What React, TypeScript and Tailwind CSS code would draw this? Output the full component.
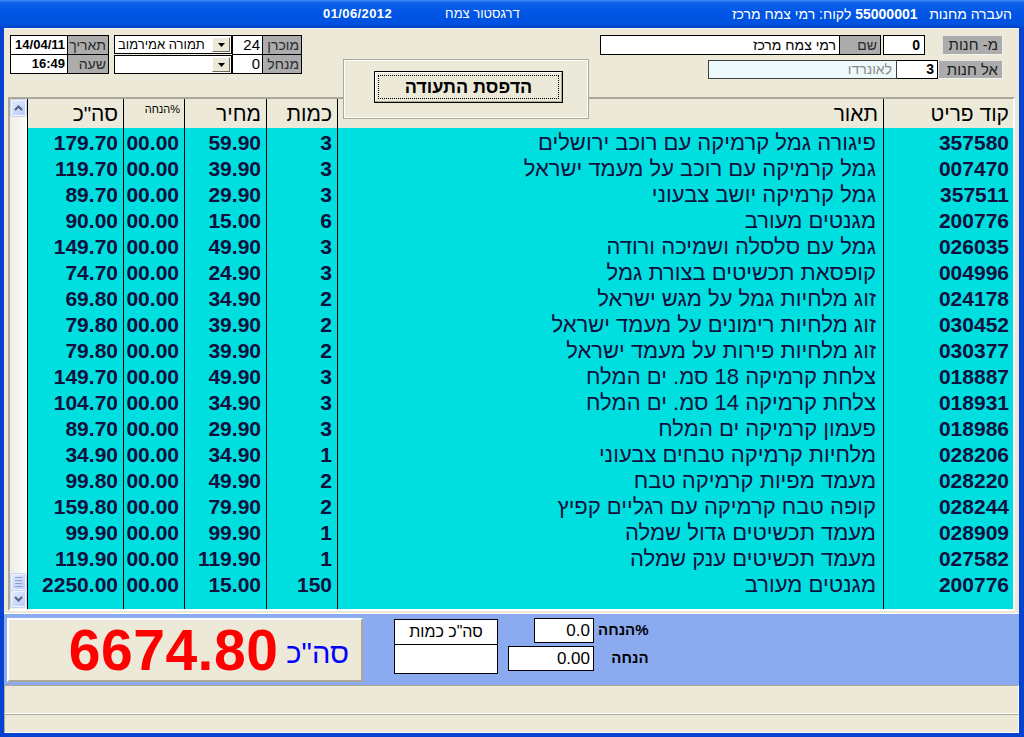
import React from "react";

const rows: [string, string, string, string, string, string][] = [
  ["357580", "פיגורה גמל קרמיקה עם רוכב ירושלים", "3", "59.90", "00.00", "179.70"],
  ["007470", "גמל קרמיקה עם רוכב על מעמד ישראל", "3", "39.90", "00.00", "119.70"],
  ["357511", "גמל קרמיקה יושב צבעוני", "3", "29.90", "00.00", "89.70"],
  ["200776", "מגנטים מעורב", "6", "15.00", "00.00", "90.00"],
  ["026035", "גמל עם סלסלה ושמיכה ורודה", "3", "49.90", "00.00", "149.70"],
  ["004996", "קופסאת תכשיטים בצורת גמל", "3", "24.90", "00.00", "74.70"],
  ["024178", "זוג מלחיות גמל על מגש ישראל", "2", "34.90", "00.00", "69.80"],
  ["030452", "זוג מלחיות רימונים על מעמד ישראל", "2", "39.90", "00.00", "79.80"],
  ["030377", "זוג מלחיות פירות על מעמד ישראל", "2", "39.90", "00.00", "79.80"],
  ["018887", "צלחת קרמיקה 18 סמ. ים המלח", "3", "49.90", "00.00", "149.70"],
  ["018931", "צלחת קרמיקה 14 סמ. ים המלח", "3", "34.90", "00.00", "104.70"],
  ["018986", "פעמון קרמיקה ים המלח", "3", "29.90", "00.00", "89.70"],
  ["028206", "מלחיות קרמיקה טבחים צבעוני", "1", "34.90", "00.00", "34.90"],
  ["028220", "מעמד מפיות קרמיקה טבח", "2", "49.90", "00.00", "99.80"],
  ["028244", "קופה טבח קרמיקה עם רגליים קפיץ", "2", "79.90", "00.00", "159.80"],
  ["028909", "מעמד תכשיטים גדול שמלה", "1", "99.90", "00.00", "99.90"],
  ["027582", "מעמד תכשיטים ענק שמלה", "1", "119.90", "00.00", "119.90"],
  ["200776", "מגנטים מעורב", "150", "15.00", "00.00", "2250.00"],
];

const cols = "grid grid-cols-[96px_61px_82px_71px_546px_130px]";

function Combo({ text }: { text: string }) {
  return (
    <div className="h-[19px] border border-black bg-white flex items-center">
      <div className="flex-1 pl-[3px] text-[13px] leading-[17px] text-black whitespace-nowrap text-left">
        <span dir="rtl">{text}</span>
      </div>
      <div className="w-[18px] h-[15px] mr-[1px] bg-[#ece9d8] border border-t-white border-l-white border-r-[#716f64] border-b-[#716f64] flex items-center justify-center">
        <svg width="7" height="4" viewBox="0 0 7 4">
          <polygon points="0,0 7,0 3.5,4" fill="#000" />
        </svg>
      </div>
    </div>
  );
}

function ScrollButton({ up }: { up: boolean }) {
  return (
    <div className="w-[15px] h-[16px] mx-auto rounded-[2px] border border-[#f4f7fe] bg-[linear-gradient(135deg,#e2eafe,#b7cbf9)] flex items-center justify-center shadow-[0_0_0_1px_#c3d2f5]">
      <svg width="9" height="6" viewBox="0 0 9 6">
        <polyline
          points={up ? "1,5 4.5,1.5 8,5" : "1,1 4.5,4.5 8,1"}
          fill="none"
          stroke="#4d6185"
          strokeWidth="2"
        />
      </svg>
    </div>
  );
}

export default function App() {
  return (
    <div className="w-[1024px] h-[737px] flex flex-col bg-[#0842d0] overflow-hidden select-none [font-family:'Liberation_Sans','DejaVu_Sans',sans-serif]">
      {/* Title bar */}
      <div className="h-[28px] shrink-0 flex items-center text-white text-[13px] bg-[linear-gradient(to_bottom,#3d8af7_0%,#0d61ea_10%,#0055e5_45%,#0052df_85%,#0043c4_100%)]">
        <span className="ml-[323px] font-bold tracking-[0.4px]">01/06/2012</span>
        <span className="ml-[53px]" dir="rtl">דרגסטור צמח</span>
        <span className="ml-auto mr-[12px] whitespace-pre text-[14px]" dir="rtl">
          {"העברה מחנות   "}<b>55000001</b>{" לקוח: רמי צמח מרכז"}
        </span>
      </div>

      {/* Client area */}
      <div className="flex-1 min-h-0 flex pl-[4px] pr-[5px] pb-[4px]">
        <div className="flex-1 bg-[#ece9d8] relative flex flex-col border-t border-[#f5f4ee]">
          {/* Header controls */}
          <div className="h-[68px] shrink-0 flex items-start pt-[6px] pl-[6px] pr-[16px] text-[14px]">
            <div className="grid grid-cols-[56px_40px] grid-rows-[18px_18px] gap-px bg-black p-px">
              <div className="bg-white text-right pr-[2px] font-bold leading-[18px] text-[13px]">14/04/11</div>
              <div className="bg-[#acacac] text-right pr-[2px] leading-[18px] text-[#2a2a2a]" dir="rtl">תאריך</div>
              <div className="bg-white text-right pr-[2px] font-bold leading-[18px] text-[13px]">16:49</div>
              <div className="bg-[#acacac] text-right pr-[2px] leading-[18px] text-[#2a2a2a]" dir="rtl">שעה</div>
            </div>
            <div className="flex flex-col gap-[1px] ml-[5px] w-[118px]">
              <Combo text="תמורה אמירמוב" />
              <Combo text="" />
            </div>
            <div className="grid grid-cols-[29px_38px] grid-rows-[18px_18px] gap-px bg-black p-px">
              <div className="bg-white text-right pr-[2px] leading-[18px] text-[15px]">24</div>
              <div className="bg-[#acacac] text-right pr-[2px] leading-[18px] text-[#2a2a2a]" dir="rtl">מוכרן</div>
              <div className="bg-white text-right pr-[2px] leading-[18px] text-[15px]">0</div>
              <div className="bg-[#acacac] text-right pr-[2px] leading-[18px] text-[#2a2a2a]" dir="rtl">מנחל</div>
            </div>

            <div className="ml-auto flex flex-col items-end">
              <div className="flex items-center h-[20px]">
                <div className="w-[240px] h-[20px] border border-black bg-white text-right pr-[3px] leading-[18px]" dir="rtl">
                  רמי צמח מרכז
                </div>
                <div className="w-[41px] h-[20px] border border-black border-l-0 bg-[#acacac] text-right pr-[3px] leading-[18px] text-[#2a2a2a]" dir="rtl">
                  שם
                </div>
                <div className="w-[42px] h-[20px] ml-[2px] border border-black bg-white text-right pr-[4px] leading-[18px] font-bold">
                  0
                </div>
                <div className="w-[61px] h-[20px] ml-[17px] border border-t-[#e4e4e4] border-l-[#e4e4e4] border-r-[#f2f2f2] border-b-[#f2f2f2] bg-[#acacac] text-right pr-[4px] leading-[18px] text-[15px] text-[#202020]" dir="rtl">
                  מ- חנות
                </div>
              </div>
              <div className="flex items-center h-[19px] mt-[5px]">
                <div className="w-[189px] h-[19px] border border-[#404040] bg-[#eef9fb] text-right pr-[4px] leading-[17px] text-[#8a8a8a]" dir="rtl">
                  לאונרדו
                </div>
                <div className="w-[41px] h-[19px] border border-black border-l-0 bg-white text-right pr-[3px] leading-[17px] font-bold">
                  3
                </div>
                <div className="w-[65px] h-[19px] border border-t-[#e4e4e4] border-l-[#e4e4e4] border-r-[#f2f2f2] border-b-[#f2f2f2] bg-[#acacac] text-right pr-[4px] leading-[17px] text-[15px] text-[#202020]" dir="rtl">
                  אל חנות
                </div>
              </div>
            </div>
          </div>

          {/* Print panel overlay */}
          <div className="absolute left-[339px] top-[30px] w-[246px] h-[60px] z-10 border border-[#aca899] bg-[#ece9d8]">
            <div className="w-full h-full border border-white pl-[29px] pt-[10px]">
              <div className="w-[189px] h-[32px] border border-black bg-[#ece9d8]">
                <div className="w-full h-full border border-t-white border-l-white border-r-[#aca899] border-b-[#aca899] p-[2px]">
                  <div className="w-full h-full border border-dotted border-black flex items-center justify-center text-[18px] font-bold text-black" dir="rtl">
                    הדפסת התעודה
                  </div>
                </div>
              </div>
            </div>
          </div>

          {/* Table */}
          <div className="h-[514px] shrink-0 ml-[4px] mr-[4px] border-2 border-t-[#aca899] border-l-[#aca899] border-b-white border-r-white flex">
            {/* scrollbar */}
            <div className="w-[17px] flex flex-col bg-[linear-gradient(to_right,#eeede5,#fdfdfb)] pt-[1px] pb-[2px]">
              <ScrollButton up />
              <div className="flex-1" />
              <div className="w-[15px] h-[16px] mx-auto mb-[1px] rounded-[2px] border border-[#f4f7fe] bg-[linear-gradient(135deg,#e2eafe,#b7cbf9)] shadow-[0_0_0_1px_#c3d2f5] flex flex-col items-center justify-center gap-[2px]">
                <div className="w-[7px] h-px bg-[#8aa0d0]" />
                <div className="w-[7px] h-px bg-[#8aa0d0]" />
                <div className="w-[7px] h-px bg-[#8aa0d0]" />
                <div className="w-[7px] h-px bg-[#8aa0d0]" />
              </div>
              <ScrollButton up={false} />
            </div>
            {/* grid */}
            <div className="flex-1 flex flex-col">
              <div className={`${cols} h-[29px] shrink-0 bg-[#ece9d8] text-black text-[21px]`}>
                <div className="border-l border-black text-right pr-[5px] leading-[30px]" dir="rtl">סה"כ</div>
                <div className="border-l border-black text-right pr-[4px] text-[11px] leading-[11px] pt-[5px]" dir="rtl">%הנחה</div>
                <div className="border-l border-black text-right pr-[5px] leading-[30px]" dir="rtl">מחיר</div>
                <div className="border-l border-black text-right pr-[5px] leading-[30px]" dir="rtl">כמות</div>
                <div className="border-l border-black text-right pr-[5px] leading-[30px]" dir="rtl">תאור</div>
                <div className="border-l border-black text-right pr-[4px] leading-[30px]" dir="rtl">קוד פריט</div>
              </div>
              <div className="flex-1 flex flex-col bg-[#00dfdf] text-[#10103e] text-[21px]">
                {rows.map((r, i) => (
                  <div key={i} className={`${cols} h-[26px] shrink-0`}>
                    <div className="border-l border-black text-right pr-[5px] leading-[30px] font-bold">{r[5]}</div>
                    <div className="border-l border-black text-right pr-[5px] leading-[30px] font-bold">{r[4]}</div>
                    <div className="border-l border-black text-right pr-[5px] leading-[30px] font-bold">{r[3]}</div>
                    <div className="border-l border-black text-right pr-[5px] leading-[30px] font-bold">{r[2]}</div>
                    <div className="border-l border-black text-right pr-[7px] leading-[30px] whitespace-nowrap text-[22px]" dir="rtl">{r[1]}</div>
                    <div className="border-l border-black text-right pr-[4px] leading-[30px] font-bold">{r[0]}</div>
                  </div>
                ))}
                <div className={`${cols} flex-1`}>
                  <div className="border-l border-black" />
                  <div className="border-l border-black" />
                  <div className="border-l border-black" />
                  <div className="border-l border-black" />
                  <div className="border-l border-black" />
                  <div className="border-l border-black" />
                </div>
              </div>
            </div>
          </div>

          {/* Bottom totals panel */}
          <div className="h-[72px] shrink-0 mt-[2px] bg-[#8caaf0] border-t border-white flex items-start">
            <div className="ml-[3px] mt-[4px] w-[356px] h-[64px] border-2 border-t-white border-l-white border-r-[#aca899] border-b-[#aca899] bg-[#ece9d8] flex items-center justify-end pr-[12px]">
              <span className="text-[57px] font-bold text-[#ff0000] leading-none tracking-[0.5px]">6674.80</span>
              <span className="text-[29px] text-[#0000ff] leading-none ml-[8px] mt-[6px]" dir="rtl">סה"כ</span>
            </div>
            <div className="ml-[31px] mt-[5px] w-[104px] h-[55px] border border-black bg-white flex flex-col">
              <div className="h-[25px] border-b border-black text-center text-[16px] leading-[24px] text-black" dir="rtl">סה"כ כמות</div>
              <div className="flex-1" />
            </div>
            <div className="ml-[10px] mt-[4px] grid grid-cols-[86px_auto] gap-y-[3px] items-center">
              <div className="justify-self-end w-[60px] h-[25px] border border-black bg-white text-right pr-[3px] text-[17px] leading-[23px]">0.0</div>
              <div className="ml-[4px] text-[15px] font-bold text-black" dir="rtl">%הנחה</div>
              <div className="w-[86px] h-[25px] border border-black bg-white text-right pr-[3px] text-[17px] leading-[23px]">0.00</div>
              <div className="ml-[4px] text-[15px] font-bold text-black" dir="rtl">הנחה</div>
            </div>
          </div>

          {/* Status bars */}
          <div className="h-[29px] shrink-0 border border-t-[#aca899] border-l-[#aca899] border-r-white border-b-white" />
          <div className="h-[19px] shrink-0 border border-t-[#aca899] border-l-[#aca899] border-r-white border-b-white" />
        </div>
      </div>
    </div>
  );
}
